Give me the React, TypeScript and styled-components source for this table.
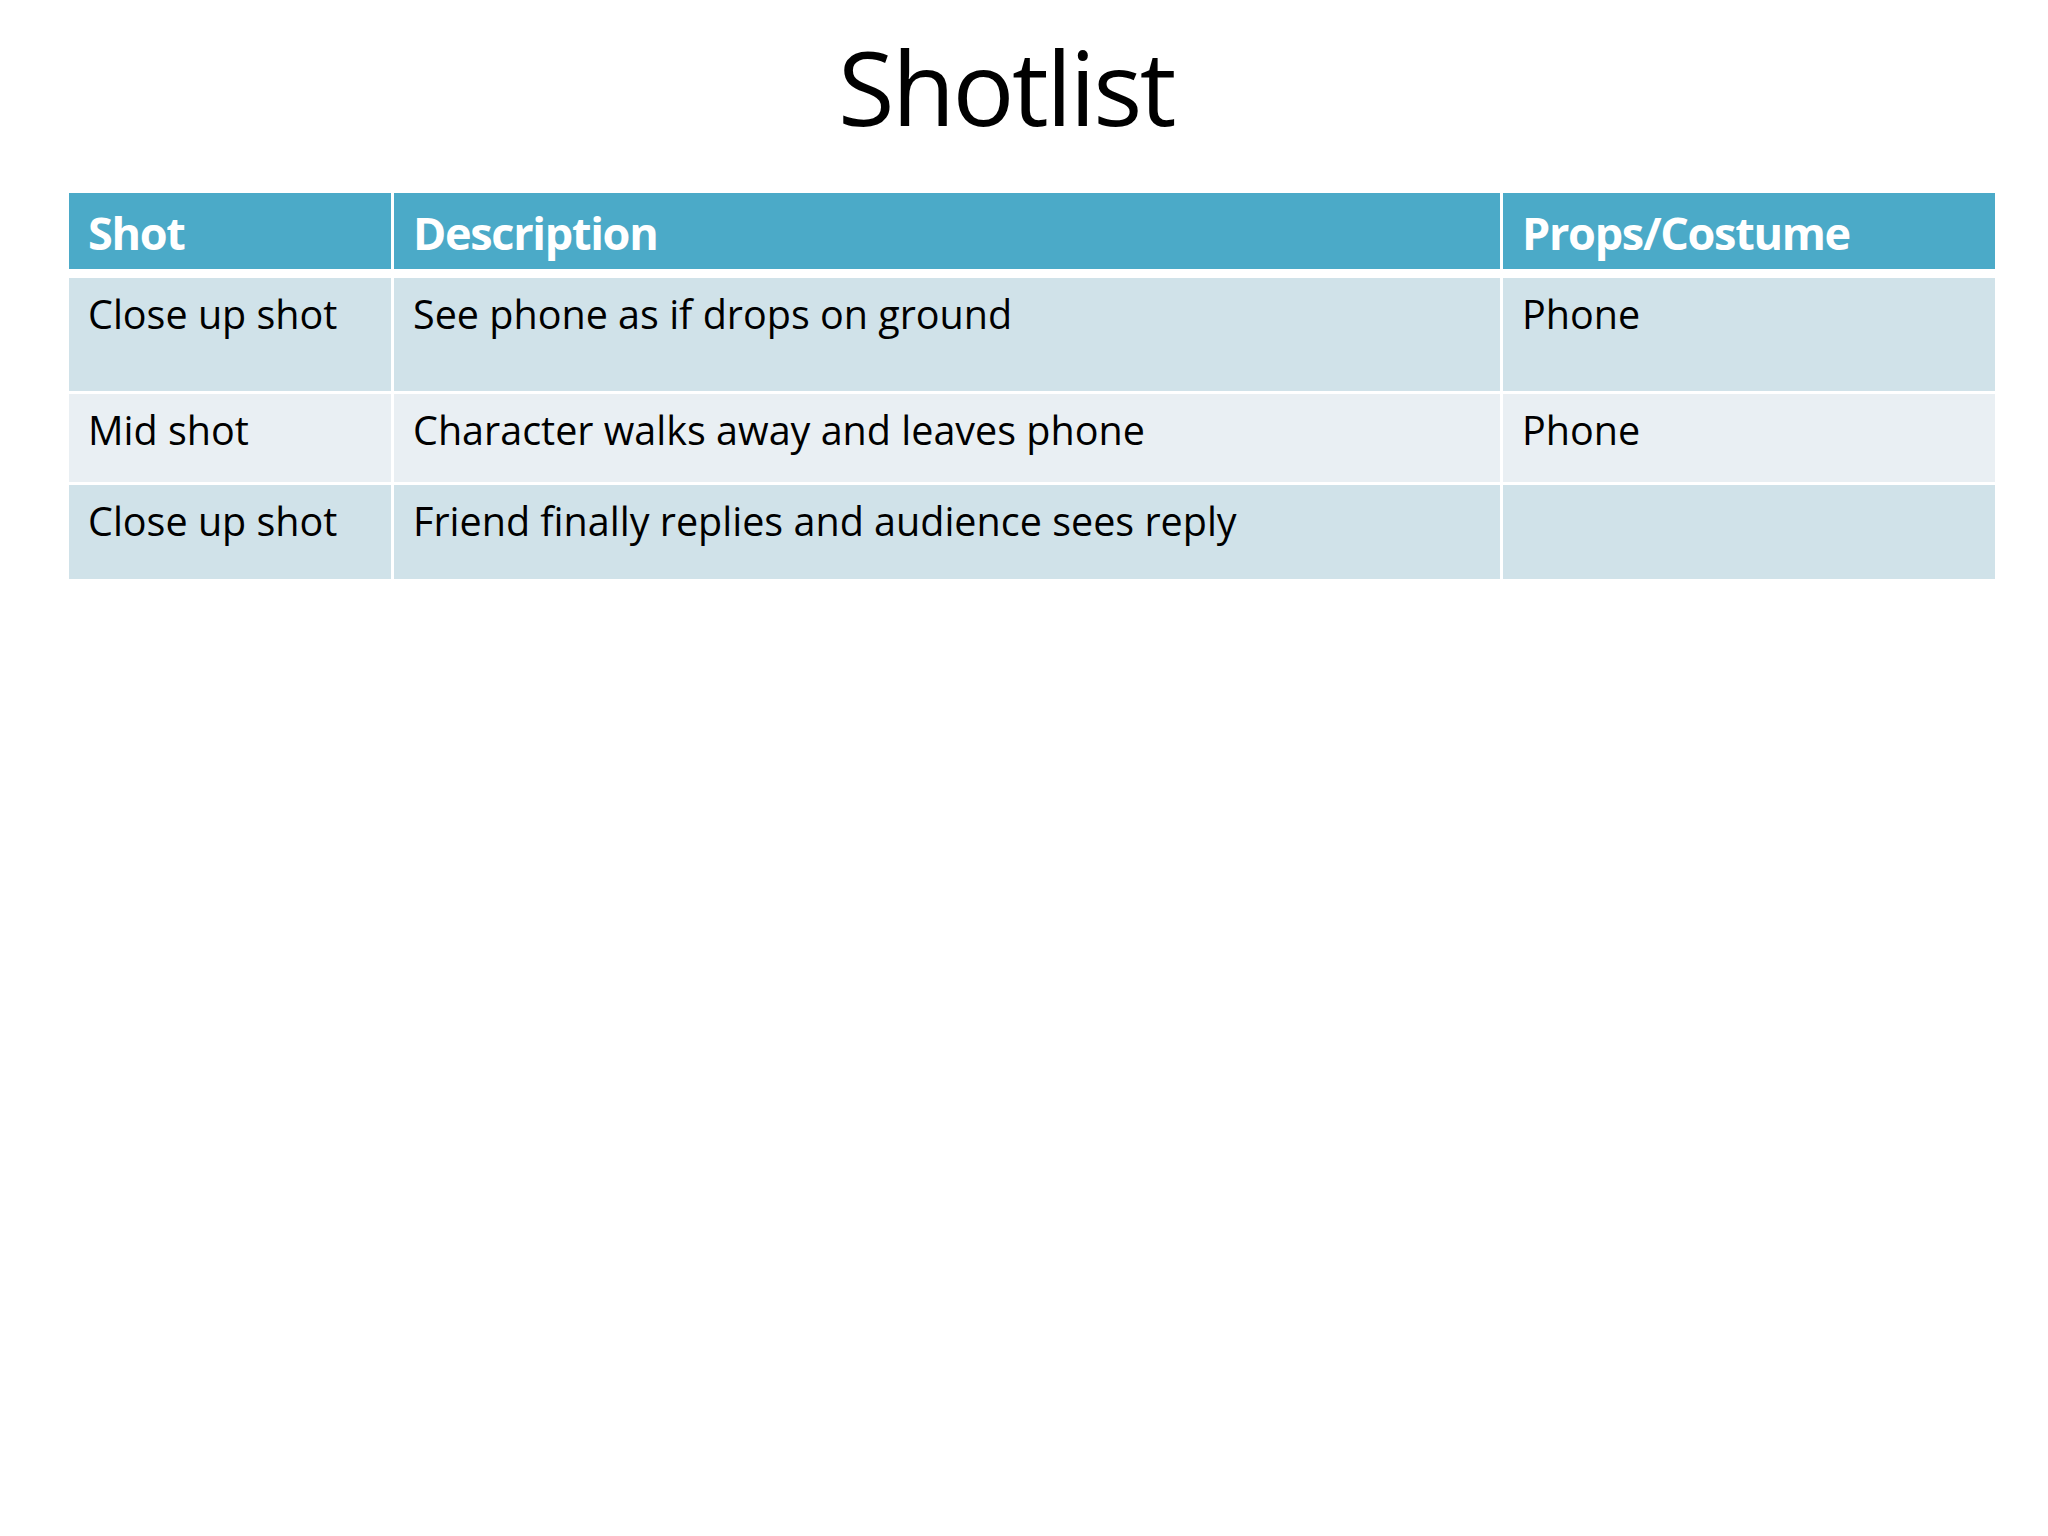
import React from 'react';
import styled, { createGlobalStyle } from 'styled-components';

const GlobalStyle = createGlobalStyle`
  html, body {
    margin: 0;
    padding: 0;
    background: #ffffff;
  }
  body {
    font-family: "Open Sans", "Noto Sans", sans-serif;
    color: #000000;
  }
`;

const Slide = styled.div`
  width: 2048px;
  min-height: 1536px;
  background: #ffffff;
  padding-top: 35px;
  box-sizing: border-box;
`;

const Title = styled.h1`
  margin: 0;
  padding-right: 36px;
  text-align: center;
  font-size: 103px;
  font-weight: 400;
  line-height: 1;
  letter-spacing: -2.5px;
`;

const Table = styled.div`
  display: flex;
  flex-direction: column;
  gap: 3px;
  width: 1926px;
  margin: 55px 0 0 69px;
`;

const Row = styled.div<{ $height: number; $head?: boolean }>`
  display: grid;
  grid-template-columns: 322px 1106px 492px;
  column-gap: 3px;
  height: ${(p) => p.$height}px;
  margin-bottom: ${(p) => (p.$head ? '6px' : '0')};
`;

const HeadCell = styled.div`
  background: #4baac8;
  color: #ffffff;
  font-size: 45px;
  font-weight: 700;
  line-height: 1;
  letter-spacing: -1.3px;
  padding: 17px 0 0 19px;
`;

const Cell = styled.div<{ $band: 'dark' | 'light' }>`
  background: ${(p) => (p.$band === 'dark' ? '#d0e2e9' : '#e9eff3')};
  font-size: 39.5px;
  line-height: 1;
  padding: 17px 0 0 19px;
`;

const columns = ['Shot', 'Description', 'Props/Costume'];

const shots = [
  { shot: 'Close up shot', description: 'See phone as if drops on ground', props: 'Phone', height: 113 },
  { shot: 'Mid shot', description: 'Character walks away and leaves phone', props: 'Phone', height: 88 },
  { shot: 'Close up shot', description: 'Friend finally replies and audience sees reply', props: '', height: 94 },
];

export default function App() {
  return (
    <>
      <GlobalStyle />
      <Slide>
        <Title>Shotlist</Title>
        <Table>
          <Row $height={76} $head>
            {columns.map((c) => (
              <HeadCell key={c}>{c}</HeadCell>
            ))}
          </Row>
          {shots.map((s, i) => {
            const band = i % 2 === 0 ? 'dark' : 'light';
            return (
              <Row key={i} $height={s.height}>
                <Cell $band={band}>{s.shot}</Cell>
                <Cell $band={band}>{s.description}</Cell>
                <Cell $band={band}>{s.props}</Cell>
              </Row>
            );
          })}
        </Table>
      </Slide>
    </>
  );
}
